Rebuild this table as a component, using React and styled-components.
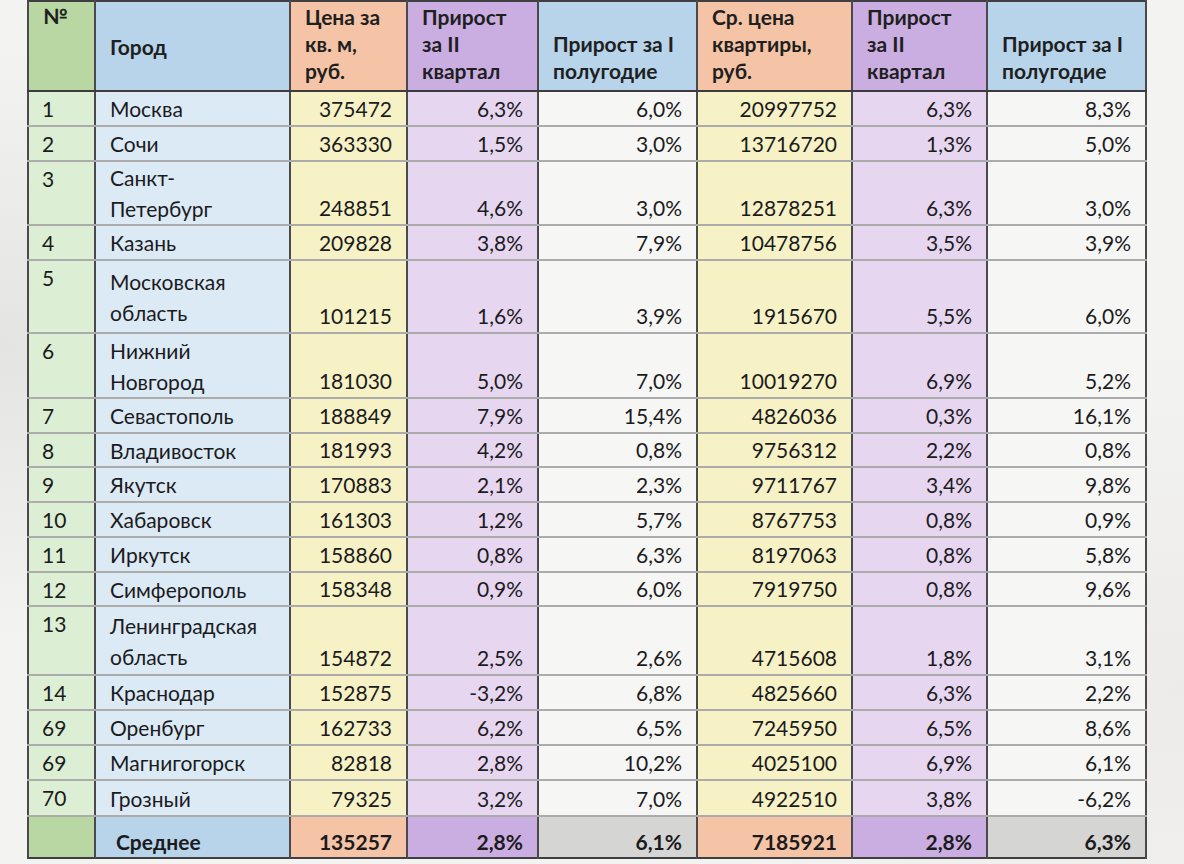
import styled, { createGlobalStyle, css } from "styled-components";

const GlobalStyle = createGlobalStyle`
  html, body {
    margin: 0;
    padding: 0;
  }
  body {
    width: 1184px;
    height: 864px;
    overflow: hidden;
    background:
      radial-gradient(ellipse at 0% 40%, #e4e4e2 0%, rgba(228, 228, 226, 0) 40%),
      radial-gradient(ellipse at 100% 80%, #ecebea 0%, rgba(236, 235, 234, 0) 35%),
      #f3f3f2;
    font-family: Lato, "Liberation Sans", sans-serif;
    color: #1b1b1d;
  }
`;

// цвета колонок: шапка / тело / итог
const palette = {
  num: { head: "#b8d7a3", body: "#dcefd4", foot: "#b8d7a3" },
  city: { head: "#b7d4eb", body: "#dbeaf5", foot: "#b7d4eb" },
  price: { head: "#f5c4a6", body: "#f7f2c6", foot: "#f5c4a6" },
  quarter: { head: "#caaee2", body: "#e6d6f0", foot: "#caaee2" },
  half: { head: "#b7d4eb", body: "#f6f6f5", foot: "#d5d5d4" },
};

const columns = [
  { kind: "num", width: 67 },
  { kind: "city", width: 195 },
  { kind: "price", width: 117 },
  { kind: "quarter", width: 131 },
  { kind: "half", width: 159 },
  { kind: "price", width: 155 },
  { kind: "quarter", width: 135 },
  { kind: "half", width: 159 },
];

const header = [
  ["№"],
  ["Город"],
  ["Цена за", "кв. м,", "руб."],
  ["Прирост", "за II", "квартал"],
  ["Прирост за I", "полугодие"],
  ["Ср. цена", "квартиры,", "руб."],
  ["Прирост", "за II", "квартал"],
  ["Прирост за I", "полугодие"],
];

const rows = [
  ["1", ["Москва"], "375472", "6,3%", "6,0%", "20997752", "6,3%", "8,3%", 35],
  ["2", ["Сочи"], "363330", "1,5%", "3,0%", "13716720", "1,3%", "5,0%", 35],
  ["3", ["Санкт-", "Петербург"], "248851", "4,6%", "3,0%", "12878251", "6,3%", "3,0%", 60],
  ["4", ["Казань"], "209828", "3,8%", "7,9%", "10478756", "3,5%", "3,9%", 35],
  ["5", ["Московская", "область"], "101215", "1,6%", "3,9%", "1915670", "5,5%", "6,0%", 73],
  ["6", ["Нижний", "Новгород"], "181030", "5,0%", "7,0%", "10019270", "6,9%", "5,2%", 65],
  ["7", ["Севастополь"], "188849", "7,9%", "15,4%", "4826036", "0,3%", "16,1%", 35],
  ["8", ["Владивосток"], "181993", "4,2%", "0,8%", "9756312", "2,2%", "0,8%", 34],
  ["9", ["Якутск"], "170883", "2,1%", "2,3%", "9711767", "3,4%", "9,8%", 35],
  ["10", ["Хабаровск"], "161303", "1,2%", "5,7%", "8767753", "0,8%", "0,9%", 35],
  ["11", ["Иркутск"], "158860", "0,8%", "6,3%", "8197063", "0,8%", "5,8%", 35],
  ["12", ["Симферополь"], "158348", "0,9%", "6,0%", "7919750", "0,8%", "9,6%", 34],
  ["13", ["Ленинградская", "область"], "154872", "2,5%", "2,6%", "4715608", "1,8%", "3,1%", 69],
  ["14", ["Краснодар"], "152875", "-3,2%", "6,8%", "4825660", "6,3%", "2,2%", 35],
  ["69", ["Оренбург"], "162733", "6,2%", "6,5%", "7245950", "6,5%", "8,6%", 35],
  ["69", ["Магнигогорск"], "82818", "2,8%", "10,2%", "4025100", "6,9%", "6,1%", 35],
  ["70", ["Грозный"], "79325", "3,2%", "7,0%", "4922510", "3,8%", "-6,2%", 36],
];

const footer = ["", "Среднее", "135257", "2,8%", "6,1%", "7185921", "2,8%", "6,3%"];

function lines(list) {
  return list.map((line, i) => (
    <span key={i}>
      {i > 0 && <br />}
      {line}
    </span>
  ));
}

function App() {
  return (
    <>
      <GlobalStyle />
      <Page>
        <Table>
          <colgroup>
            {columns.map((col, i) => (
              <col key={i} style={{ width: col.width }} />
            ))}
          </colgroup>
          <thead>
            <HeadRow>
              {header.map((label, i) => (
                <HeadCell
                  key={i}
                  $kind={columns[i].kind}
                  $valign={i === 0 ? "top" : i === 1 ? "middle" : "bottom"}
                >
                  {lines(label)}
                </HeadCell>
              ))}
            </HeadRow>
          </thead>
          <tbody>
            {rows.map((row, r) => {
              const height = row[8];
              return (
                <BodyRow key={r} style={{ height }}>
                  <NumCell $kind="num">{row[0]}</NumCell>
                  <CityCell $kind="city">{lines(row[1])}</CityCell>
                  {row.slice(2, 8).map((value, c) => (
                    <ValueCell key={c} $kind={columns[c + 2].kind}>
                      {value}
                    </ValueCell>
                  ))}
                </BodyRow>
              );
            })}
          </tbody>
          <tfoot>
            <FootRow>
              {footer.map((value, i) => (
                <FootCell key={i} $kind={columns[i].kind} $city={i === 1}>
                  {value}
                </FootCell>
              ))}
            </FootRow>
          </tfoot>
        </Table>
      </Page>
    </>
  );
}

const Page = styled.div`
  padding: 0 0 0 27px;
`;

const Table = styled.table`
  border-collapse: collapse;
  table-layout: fixed;
  width: 1119px;
  border: 2px solid #3f3f41;
  font-size: 21px;
`;

const cellBase = css`
  padding: 0 14px;
  border-left: 2px solid #4a4a4c;
  border-right: 2px solid #4a4a4c;
  white-space: nowrap;
  overflow: hidden;
`;

const HeadRow = styled.tr`
  height: 90px;
`;

const HeadCell = styled.th`
  ${cellBase};
  background: ${({ $kind }) => palette[$kind].head};
  border-bottom: 2px solid #3c3c3e;
  vertical-align: ${({ $valign }) => $valign};
  text-align: left;
  font-weight: 700;
  line-height: 27px;
  padding-top: 0;
  padding-bottom: ${({ $valign }) => ($valign === "bottom" ? "6px" : "0")};
  color: #1f1f21;
`;

const BodyRow = styled.tr``;

const BodyCell = styled.td`
  ${cellBase};
  background: ${({ $kind }) => palette[$kind].body};
  border-bottom: 2px solid #ababab;
  line-height: 28px;
`;

const NumCell = styled(BodyCell)`
  vertical-align: top;
  padding-top: 3px;
  padding-left: 13px;
`;

const CityCell = styled(BodyCell)`
  vertical-align: middle;
  line-height: 31px;
`;

const ValueCell = styled(BodyCell)`
  vertical-align: bottom;
  text-align: right;
  padding-bottom: 2px;
`;

const FootRow = styled.tr`
  height: 42px;
`;

const FootCell = styled.td`
  ${cellBase};
  background: ${({ $kind }) => palette[$kind].foot};
  border-top: 2px solid #3c3c3e;
  vertical-align: bottom;
  text-align: ${({ $city }) => ($city ? "left" : "right")};
  padding-left: ${({ $city }) => ($city ? "20px" : "14px")};
  padding-bottom: 1px;
  line-height: 28px;
  font-weight: 700;
`;

export default App;
